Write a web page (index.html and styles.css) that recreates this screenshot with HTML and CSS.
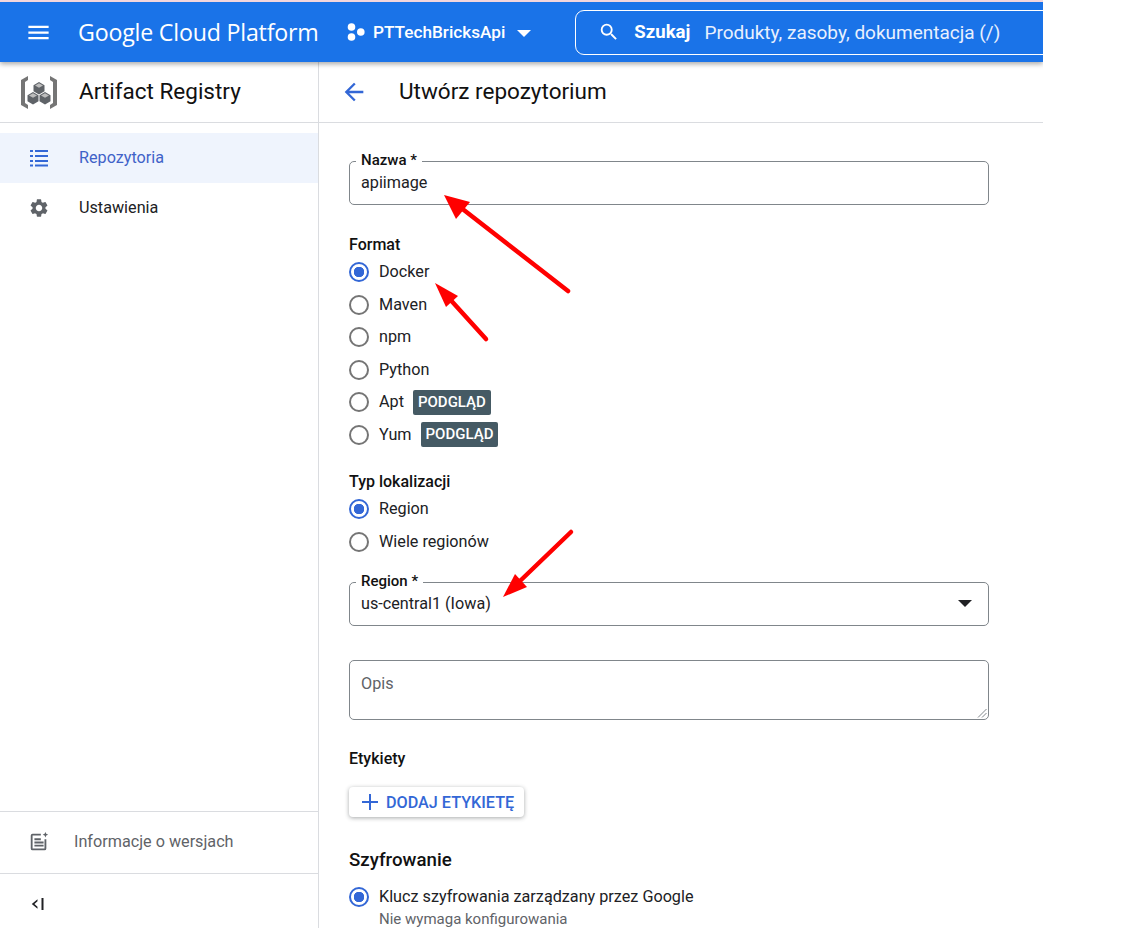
FILE: index.html
```html
<!DOCTYPE html>
<html lang="pl">
<head>
  <meta charset="UTF-8">
  <meta name="viewport" content="width=device-width, initial-scale=1.0">
  <title>Utwórz repozytorium</title>
  <link rel="stylesheet" href="styles.css">
</head>

<body>
<div class="app">
  <header class="topbar">
    <svg class="menu-icon" viewBox="0 0 24 24"><path d="M3 18h18v-2H3v2zm0-5h18v-2H3v2zm0-7v2h18V6H3z"/></svg>
    <span class="brand">Google Cloud Platform</span>
    <div class="project">
      <svg class="project-icon" viewBox="0 0 18 18"><circle cx="4.500" cy="4" r="3.800"/><circle cx="4.500" cy="14" r="3.800"/><circle cx="13.800" cy="9" r="3.800"/></svg>
      <span>PTTechBricksApi</span>
      <span class="caret"></span>
    </div>
    <div class="search">
      <svg class="search-icon" viewBox="0 0 24 24"><path d="M15.500 14h-.79l-.28-.27A6.471 6.471 0 0 0 16 9.500 6.500 6.500 0 1 0 9.500 16c1.610 0 3.090-.59 4.230-1.570l.27.28v.79l5 4.990L20.490 19l-4.990-5zm-6 0C7.010 14 5 11.990 5 9.500S7.010 5 9.500 5 14 7.010 14 9.500 11.990 14 9.500 14z"/></svg>
      <b>Szukaj</b>
      <span>Produkty, zasoby, dokumentacja (/)</span>
    </div>
  </header>

  <div class="body">
    <aside class="sidebar">
      <div class="side-head">
        <svg class="logo" viewBox="0 0 38 33">
          <path fill="#757575" d="M8 0 1 4v25l7 4v-4l-3-2V6l3-2zM30 0l7 4v25l-7 4v-4l3-2V6l-3-2z"/>
          <path fill="#5f6368" d="M19 6l5.500 3.200v6L19 18.400l-5.500-3.200v-6z"/>
          <path fill="#5f6368" d="M13 16l5.500 3.200v6L13 28.400l-5.500-3.200v-6z"/>
          <path fill="#5f6368" d="M25 16l5.500 3.200v6L25 28.400l-5.500-3.200v-6z"/>
          <path fill="#bdbdbd" d="M19 7.200l4 2.300-4 2.300-4-2.300zM13 17.200l4 2.300-4 2.300-4-2.300zM25 17.200l4 2.300-4 2.300-4-2.300z"/>
        </svg>
        <span class="side-title">Artifact Registry</span>
      </div>
      <nav class="side-nav">
        <a class="side-item active">
          <svg viewBox="0 0 18 18"><path d="M0 1h3v2H0zM5 1h13v2H5zM0 6h3v2H0zM5 6h13v2H5zM0 11h3v2H0zM5 11h13v2H5zM0 15.500h3v2H0zM5 15.500h13v2H5z"/></svg>
          <span>Repozytoria</span>
        </a>
        <a class="side-item">
          <svg viewBox="2 2 20 20"><path d="M19.140 12.940c.04-.3.06-.61.06-.94 0-.32-.02-.64-.07-.94l2.030-1.580a.49.49 0 0 0 .12-.61l-1.920-3.320a.488.488 0 0 0-.59-.22l-2.390.96c-.5-.38-1.030-.7-1.620-.94l-.36-2.540a.484.484 0 0 0-.48-.41h-3.840c-.24 0-.43.17-.47.41l-.36 2.540c-.59.24-1.130.57-1.620.94l-2.390-.96c-.22-.08-.47 0-.59.22L2.740 8.870c-.12.21-.08.47.12.61l2.030 1.580c-.05.3-.09.63-.09.94s.02.64.07.94l-2.030 1.580a.49.49 0 0 0-.12.61l1.920 3.320c.12.22.37.29.59.22l2.390-.96c.5.38 1.030.7 1.620.94l.36 2.540c.05.24.24.41.48.41h3.840c.24 0 .44-.17.47-.41l.36-2.540c.59-.24 1.130-.56 1.620-.94l2.390.96c.22.08.47 0 .59-.22l1.920-3.320c.12-.22.07-.47-.12-.61l-2.010-1.580zM12 15.600c-1.980 0-3.600-1.620-3.600-3.600s1.620-3.600 3.600-3.600 3.600 1.620 3.600 3.600-1.620 3.600-3.600 3.600z"/></svg>
          <span>Ustawienia</span>
        </a>
      </nav>
      <div class="side-notes">
        <svg viewBox="0 0 24 24"><path d="M14 3H5a2 2 0 0 0-2 2v14a2 2 0 0 0 2 2h13a2 2 0 0 0 2-2V9h-2v10H5V5h9z"/><path d="M7 8h7v2H7zM7 11.500h10v2H7zM7 15h10v2H7z"/><path d="M19 1l.9 2.100L22 4l-2.100.9L19 7l-.9-2.100L16 4l2.100-.9z"/></svg>
        <span>Informacje o wersjach</span>
      </div>
      <div class="side-collapse">
        <svg viewBox="0 0 16 16"><path d="M7.500 3.200 1.800 8l5.700 4.800v-2L4.400 8l3.100-2.800zM11.500 2h2v12h-2z"/></svg>
      </div>
    </aside>

    <main class="content">
      <div class="page-head">
        <svg class="back" viewBox="0 0 24 24"><path d="M20 11H7.830l5.590-5.590L12 4l-8 8 8 8 1.410-1.410L7.830 13H20v-2z"/></svg>
        <h1>Utwórz repozytorium</h1>
      </div>

      <form class="form">
        <div class="field field-name">
          <label class="field-label">Nazwa *</label>
          <span class="field-value">apiimage</span>
        </div>

        <div class="group-label group-format">Format</div>
        <div class="radio checked"><i></i><span>Docker</span></div>
        <div class="radio"><i></i><span>Maven</span></div>
        <div class="radio"><i></i><span>npm</span></div>
        <div class="radio"><i></i><span>Python</span></div>
        <div class="radio"><i></i><span>Apt</span><em class="tag">PODGLĄD</em></div>
        <div class="radio"><i></i><span>Yum</span><em class="tag">PODGLĄD</em></div>

        <div class="group-label group-location">Typ lokalizacji</div>
        <div class="radio checked"><i></i><span>Region</span></div>
        <div class="radio"><i></i><span>Wiele regionów</span></div>

        <div class="field field-region">
          <label class="field-label">Region *</label>
          <span class="field-value">us-central1 (Iowa)</span>
          <span class="select-caret"></span>
        </div>

        <div class="field field-desc">
          <span class="placeholder">Opis</span>
          <svg class="resize" viewBox="0 0 10 10"><path d="M9.500 1 1 9.500M9.500 5 5 9.500"/></svg>
        </div>

        <div class="group-label group-labels">Etykiety</div>
        <button type="button" class="add-btn">
          <svg viewBox="0 0 24 24"><path d="M20 13h-7v7h-2v-7H4v-2h7V4h2v7h7v2z"/></svg>
          DODAJ ETYKIETĘ
        </button>

        <h2>Szyfrowanie</h2>
        <div class="radio checked"><i></i><span>Klucz szyfrowania zarządzany przez Google</span></div>
        <div class="radio-note">Nie wymaga konfigurowania</div>
      </form>
    </main>
  </div>

  <svg class="arrows" viewBox="0 0 1043 928">
    <path class="shaft" d="M568 291 460 207"/>
    <path class="head" d="M444 195 470 202 456 219z"/>
    <path class="shaft" d="M486 339 447 296"/>
    <path class="head" d="M435 283 458 296 446 307z"/>
    <path class="shaft" d="M571 532 520 581"/>
    <path class="head" d="M503 597 515 574 527 587z"/>
  </svg>
</div>
</body>
</html>
```

FILE: styles.css
```css
* {
  box-sizing: border-box;
  padding: 0;
  margin: 0;
}

body {
  background: #fff;
  font-family: Roboto, "Liberation Sans", sans-serif;
  font-size: 16.2px;
  color: #202124;
  overflow: hidden;
}

.app {
  position: relative;
  width: 1043px;
  height: 928px;
  overflow: hidden;
  border-top: 2px solid #f3d6dc;
  display: flex;
  flex-direction: column;
}

/* top bar */
.topbar {
  height: 60px;
  flex: none;
  background: #1a73e8;
  color: #fff;
  display: flex;
  align-items: center;
  padding-left: 25px;
  box-shadow: 0 2px 5px rgba(0, 0, 0, .35);
  position: relative;
  z-index: 2;
}

.topbar svg {
  fill: #fff;
}

.menu-icon {
  width: 27px;
  height: 27px;
}

.brand {
  margin-left: 26px;
  width: 241px;
  font-family: "Open Sans", Roboto, sans-serif;
  font-size: 23.2px;
  letter-spacing: -.2px;
  white-space: nowrap;
}

.project {
  margin-left: 28px;
  display: flex;
  align-items: center;
  font-size: 17.2px;
  font-weight: 500;
}

.project-icon {
  width: 18px;
  height: 18px;
  margin-right: 8px;
}

.caret {
  width: 0;
  height: 0;
  border: 7px solid transparent;
  border-top: 7px solid #fff;
  border-bottom: 0;
  margin-left: 12px;
  margin-top: 3px;
}

.search {
  margin-left: 44px;
  flex: 1;
  height: 45px;
  margin-right: -20px;
  border: 1px solid #fff;
  border-radius: 9px;
  display: flex;
  align-items: center;
  padding-left: 22px;
  font-size: 19px;
}

.search-icon {
  width: 22px;
  height: 22px;
  margin-right: 14px;
}

.search b {
  font-size: 18.6px;
  font-weight: 700;
  margin-right: 14px;
}

.search span {
  color: #e8f0fe;
}

/* page body */
.body {
  flex: 1;
  display: flex;
  min-height: 0;
}

.sidebar {
  width: 319px;
  flex: none;
  border-right: 1px solid #dadce0;
  display: flex;
  flex-direction: column;
}

.side-head {
  height: 61px;
  flex: none;
  border-bottom: 1px solid #dadce0;
  display: flex;
  align-items: center;
  padding-left: 20px;
}

.logo {
  width: 38px;
  height: 33px;
  margin-right: 21px;
}

.side-title {
  font-size: 22.5px;
  color: #111;
  margin-bottom: 2px;
}

.side-nav {
  padding-top: 10px;
  flex: 1;
}

.side-item {
  height: 50px;
  display: flex;
  align-items: center;
  padding-left: 30px;
}

.side-item span {
  margin-bottom: 2px;
}

.side-item svg {
  width: 18px;
  height: 18px;
  fill: #5f6368;
  margin-right: 31px;
}

.side-item.active {
  background: #eff4fd;
  color: #3f62c8;
}

.side-item.active svg {
  fill: #3367d6;
}

.side-notes {
  height: 62px;
  flex: none;
  border-top: 1px solid #dadce0;
  display: flex;
  align-items: center;
  padding-left: 28px;
  padding-bottom: 2px;
  color: #5f6368;
}

.side-notes svg {
  width: 22px;
  height: 22px;
  fill: #5f6368;
  margin-right: 24px;
}

.side-collapse {
  height: 55px;
  flex: none;
  border-top: 1px solid #dadce0;
  display: flex;
  align-items: center;
  padding-left: 30px;
  padding-top: 5px;
}

.side-collapse svg {
  width: 16px;
  height: 16px;
  fill: #202124;
}

/* main column */
.content {
  flex: 1;
  min-width: 0;
}

.page-head {
  height: 61px;
  border-bottom: 1px solid #dadce0;
  display: flex;
  align-items: center;
  padding-left: 21px;
}

.back {
  width: 28px;
  height: 28px;
  fill: #3367d6;
  margin-right: 31px;
}

h1 {
  font-size: 22.5px;
  font-weight: 400;
  color: #111;
  margin-bottom: 2px;
}

.form {
  width: 670px;
  padding-left: 30px;
}

.field {
  position: relative;
  width: 640px;
  height: 44px;
  border: 1px solid #80868b;
  border-radius: 5px;
  padding: 11px;
}

.field-name {
  margin-top: 38px;
}

.field-region {
  margin-top: 24px;
}

.field-desc {
  height: 60px;
  margin-top: 34px;
  padding-top: 13px;
}

.field-label {
  position: absolute;
  left: 6px;
  top: -11px;
  background: #fff;
  padding: 0 5px;
  font-size: 15px;
  font-weight: 500;
  line-height: 18px;
  color: #111;
}

.field-value,
.placeholder {
  line-height: 20px;
}

.placeholder {
  color: #5f6368;
}

.select-caret {
  position: absolute;
  right: 16px;
  top: 17px;
  width: 0;
  height: 0;
  border: 7px solid transparent;
  border-top: 7px solid #202124;
  border-bottom: 0;
}

.resize {
  position: absolute;
  right: 1px;
  bottom: 1px;
  width: 10px;
  height: 10px;
  fill: none;
  stroke: #80868b;
}

.group-label {
  line-height: 20px;
  font-weight: 500;
  font-size: 16px;
  margin-bottom: 1px;
  color: #111;
}

.group-format {
  margin-top: 30px;
}

.group-location {
  margin-top: 21px;
}

.group-labels {
  margin-top: 29px;
  margin-bottom: 0;
}

.radio {
  height: 32.5px;
  display: flex;
  align-items: center;
}

.radio span {
  margin-bottom: 1px;
}

.radio i {
  width: 20px;
  height: 20px;
  flex: none;
  border: 2px solid #757575;
  border-radius: 50%;
  margin-right: 10px;
}

.radio.checked i {
  border-color: #3367d6;
  background: radial-gradient(circle, #3367d6 5px, #fff 5.500px);
}

.tag {
  margin-left: 9px;
  height: 25px;
  padding: 0 5px;
  border-radius: 2px;
  background: #455a64;
  color: #fff;
  font-style: normal;
  font-size: 15px;
  font-weight: 500;
  line-height: 25px;
}

.add-btn {
  margin-top: 18px;
  width: 175px;
  height: 30px;
  border: 0;
  border-radius: 4px;
  background: #fff;
  box-shadow: 0 1px 4px rgba(60, 64, 67, .45);
  color: #3367d6;
  font-family: inherit;
  font-size: 16.2px;
  font-weight: 500;
  display: flex;
  align-items: center;
  padding-left: 9px;
  white-space: nowrap;
}

.add-btn svg {
  width: 24px;
  height: 24px;
  fill: #3367d6;
  margin-right: 4px;
}

h2 {
  margin-top: 31px;
  font-size: 18.7px;
  font-weight: 500;
  line-height: 24px;
  color: #111;
}

h2 + .radio {
  margin-top: 9px;
}

.radio-note {
  margin-left: 30px;
  margin-top: -4px;
  font-size: 15px;
  color: #5f6368;
  line-height: 18px;
}

/* annotations drawn over the screenshot */
.arrows {
  position: absolute;
  left: 0;
  top: -2px;
  width: 1043px;
  height: 928px;
  pointer-events: none;
  z-index: 3;
}

.shaft {
  fill: none;
  stroke: #ff0000;
  stroke-width: 4.5;
  stroke-linecap: round;
}

.head {
  fill: #ff0000;
}
```
